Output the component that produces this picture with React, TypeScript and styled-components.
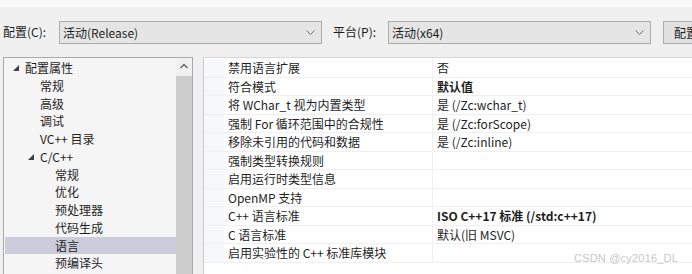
import React from 'react';
import styled, { createGlobalStyle } from 'styled-components';

const GlobalStyle = createGlobalStyle`
  html, body {
    margin: 0;
    padding: 0;
    background: #f0f0f0;
  }
  body {
    font-family: "Noto Sans CJK SC", "Noto Sans", sans-serif;
    font-size: 12px;
    color: #1e1e1e;
  }
`;

const Page = styled.div`
  width: 692px;
  height: 274px;
  overflow: hidden;
  display: flex;
  flex-direction: column;
  position: relative;
`;

const TopStrip = styled.div`
  height: 7px;
  background: #f9f9f9;
`;

const Toolbar = styled.div`
  height: 50px;
  display: flex;
  align-items: center;
  padding-left: 3px;
  white-space: nowrap;
`;

const Label = styled.span<{ $width: number }>`
  width: ${(p) => p.$width}px;
  flex-shrink: 0;
  line-height: 16px;
`;

const Select = styled.div`
  width: 263px;
  height: 23px;
  box-sizing: border-box;
  border: 1px solid #adadad;
  background: #e5e5e5;
  display: flex;
  align-items: center;
  justify-content: space-between;
  padding: 0 6px 0 3px;
  flex-shrink: 0;
`;

const SelectGap = styled.div<{ $width: number }>`
  width: ${(p) => p.$width}px;
  flex-shrink: 0;
`;

const Button = styled.div`
  height: 23px;
  box-sizing: border-box;
  border: 1px solid #adadad;
  background: #e1e1e1;
  padding: 0 10px;
  display: flex;
  align-items: center;
  flex-shrink: 0;
`;

const Body = styled.div`
  flex: 1;
  display: flex;
  padding-left: 3px;
  gap: 10px;
  min-height: 0;
`;

const Tree = styled.div`
  width: 190px;
  box-sizing: border-box;
  border: 1px solid #a9a9a9;
  border-bottom: none;
  background: #f5f5f5;
  display: flex;
  flex-shrink: 0;
`;

const TreeList = styled.div`
  flex: 1;
  padding-top: 1px;
  padding-left: 1px;
`;

const TreeItem = styled.div<{ $indent: number; $selected?: boolean }>`
  height: 17.75px;
  line-height: 17.75px;
  display: flex;
  align-items: center;
  padding-left: ${(p) => p.$indent}px;
  background: ${(p) => (p.$selected ? '#cbcddb' : 'transparent')};
  white-space: nowrap;
`;

const Expander = styled.svg`
  width: 6px;
  height: 6px;
  margin-right: 6px;
  flex-shrink: 0;
`;

const Scrollbar = styled.div`
  width: 16px;
  background: #f0f0f0;
  display: flex;
  flex-direction: column;
  align-items: center;
`;

const ScrollArrow = styled.svg`
  width: 16px;
  height: 17px;
  flex-shrink: 0;
`;

const ScrollThumb = styled.div`
  margin-top: 1px;
  width: 16px;
  flex: 1;
  background: #cdcdcd;
`;

const Grid = styled.div`
  flex: 1;
  box-sizing: border-box;
  border-top: 1px solid #d6d6d6;
  border-left: 1px solid #c8c8c8;
  background: #ffffff;
  display: flex;
  flex-direction: column;
  padding-top: 1px;
`;

const Row = styled.div`
  height: 18.5px;
  display: flex;
  border-bottom: 1px solid #f0f0f0;
  box-sizing: border-box;
`;

const Gutter = styled.div`
  width: 20px;
  background: #f6f8fb;
  flex-shrink: 0;
`;

const NameCell = styled.div`
  width: 209px;
  box-sizing: border-box;
  padding-left: 4px;
  line-height: 17.5px;
  border-right: 1px solid #f0f0f0;
  white-space: nowrap;
  flex-shrink: 0;
`;

const ValueCell = styled.div<{ $bold?: boolean }>`
  flex: 1;
  padding-left: 4px;
  line-height: 17.5px;
  white-space: nowrap;
  font-weight: ${(p) => (p.$bold ? 700 : 400)};
`;

const Watermark = styled.div`
  position: absolute;
  left: 574px;
  top: 252px;
  font-family: "Liberation Sans", "Noto Sans", sans-serif;
  font-size: 11px;
  color: #c8c8c8;
  letter-spacing: 0.2px;
`;

const Chevron = () => (
  <svg width="9" height="5" viewBox="0 0 9 5">
    <path d="M0.5 0.5 L4.5 4.5 L8.5 0.5" fill="none" stroke="#6e6e6e" strokeWidth="1" />
  </svg>
);

const Triangle = () => (
  <Expander viewBox="0 0 6 6">
    <path d="M6 0 L6 6 L0 6 Z" fill="#404040" />
  </Expander>
);

const treeItems: { text: string; indent: number; expand?: boolean; selected?: boolean }[] = [
  { text: '配置属性', indent: 8, expand: true },
  { text: '常规', indent: 35 },
  { text: '高级', indent: 35 },
  { text: '调试', indent: 35 },
  { text: 'VC++ 目录', indent: 35 },
  { text: 'C/C++', indent: 23, expand: true },
  { text: '常规', indent: 50 },
  { text: '优化', indent: 50 },
  { text: '预处理器', indent: 50 },
  { text: '代码生成', indent: 50 },
  { text: '语言', indent: 50, selected: true },
  { text: '预编译头', indent: 50 },
];

const rows: { name: string; value: string; bold?: boolean }[] = [
  { name: '禁用语言扩展', value: '否' },
  { name: '符合模式', value: '默认值', bold: true },
  { name: '将 WChar_t 视为内置类型', value: '是 (/Zc:wchar_t)' },
  { name: '强制 For 循环范围中的合规性', value: '是 (/Zc:forScope)' },
  { name: '移除未引用的代码和数据', value: '是 (/Zc:inline)' },
  { name: '强制类型转换规则', value: '' },
  { name: '启用运行时类型信息', value: '' },
  { name: 'OpenMP 支持', value: '' },
  { name: 'C++ 语言标准', value: 'ISO C++17 标准 (/std:c++17)', bold: true },
  { name: 'C 语言标准', value: '默认(旧 MSVC)' },
  { name: '启用实验性的 C++ 标准库模块', value: '' },
];

export default function App() {
  return (
    <>
      <GlobalStyle />
      <Page>
        <TopStrip />
        <Toolbar>
          <Label $width={56}>配置(C):</Label>
          <Select>
            <span>活动(Release)</span>
            <Chevron />
          </Select>
          <SelectGap $width={11} />
          <Label $width={55}>平台(P):</Label>
          <Select>
            <span>活动(x64)</span>
            <Chevron />
          </Select>
          <SelectGap $width={12} />
          <Button>配置管理器(O)...</Button>
        </Toolbar>
        <Body>
          <Tree>
            <TreeList>
              {treeItems.map((item, i) => (
                <TreeItem key={i} $indent={item.indent} $selected={item.selected}>
                  {item.expand && <Triangle />}
                  {item.text}
                </TreeItem>
              ))}
            </TreeList>
            <Scrollbar>
              <ScrollArrow viewBox="0 0 16 17">
                <path d="M4.5 10 L8 6.5 L11.5 10" fill="none" stroke="#606060" strokeWidth="1.3" />
              </ScrollArrow>
              <ScrollThumb />
            </Scrollbar>
          </Tree>
          <Grid>
            {rows.map((r, i) => (
              <Row key={i}>
                <Gutter />
                <NameCell>{r.name}</NameCell>
                <ValueCell $bold={r.bold}>{r.value}</ValueCell>
              </Row>
            ))}
          </Grid>
        </Body>
        <Watermark>CSDN @cy2016_DL</Watermark>
      </Page>
    </>
  );
}
